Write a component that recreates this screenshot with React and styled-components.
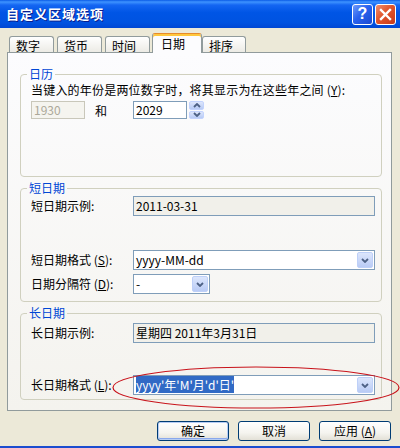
import styled, { createGlobalStyle, css } from 'styled-components'

// Styles
const GlobalStyle = createGlobalStyle`
  html, body {
    margin: 0;
    padding: 0;
    background: #ECE9D8;
  }
  body {
    font-family: "Noto Sans CJK SC", "Noto Sans", sans-serif;
    font-size: 12px;
    color: #000;
  }
`
const Window = styled('div')`
  position: relative;
  display: flex;
  flex-flow: column nowrap;
  width: 400px;
  height: 448px;
  box-sizing: border-box;
  background: #ECE9D8;
  border-bottom: 2px solid #1C4DCF;
  overflow: hidden;
`
const TitleBar = styled('div')`
  display: flex;
  flex-flow: row nowrap;
  align-items: center;
  height: 28px;
  padding: 0 4px 0 6px;
  background: linear-gradient(
    to bottom,
    #0A5BE6 0%,
    #3E93FF 7%,
    #1466F2 18%,
    #0055E5 45%,
    #0053E1 80%,
    #0047D4 100%
  );
`
const Title = styled('span')`
  font-size: 13px;
  font-weight: 700;
  letter-spacing: 1px;
  color: #FFFFFF;
  text-shadow: 1px 1px 0 #0A1E8C;
  line-height: 16px;
`
const Caption = styled('div')`
  display: flex;
  gap: 2px;
  margin-left: auto;
`
const CaptionButton = styled('span')`
  box-sizing: border-box;
  display: flex;
  align-items: center;
  justify-content: center;
  width: 21px;
  height: 21px;
  border: 1px solid #FFFFFF;
  border-radius: 3px;
  color: #FFFFFF;
  font-family: "Liberation Sans", sans-serif;
  font-weight: 700;
  font-size: 16px;
  ${({ $close }) =>
    $close
      ? css`
          background: linear-gradient(135deg, #F08E6E 0%, #E0552C 45%, #C5391A 100%);
        `
      : css`
          background: linear-gradient(135deg, #6F9BFA 0%, #2962EE 45%, #1A48D0 100%);
        `}
`
const Body = styled('div')`
  display: flex;
  flex-flow: column nowrap;
  flex-grow: 1;
  padding: 5px 8px 0 7px;
`
const TabStrip = styled('div')`
  display: flex;
  flex-flow: row nowrap;
  align-items: flex-end;
  gap: 3px;
  height: 19px;
  padding-left: 2px;
`
const Tab = styled('div')`
  box-sizing: border-box;
  flex-shrink: 0;
  width: ${({ $w }) => $w}px;
  height: 16px;
  padding: 3px 0 0 6px;
  border: 1px solid #919B9C;
  border-bottom: none;
  border-radius: 3px 3px 0 0;
  background: linear-gradient(#FFFFFF, #ECEBE5);
  line-height: 12px;
  ${({ $active }) =>
    $active &&
    css`
      position: relative;
      z-index: 1;
      height: 20px;
      margin: 0 -3px -1px -1px;
      padding: 4px 0 0 8px;
      border-top-color: #E68B2C;
      box-shadow: inset 0 2px 0 #FFC73C;
      background: #FCFCFE;
    `}
`
const Panel = styled('div')`
  box-sizing: border-box;
  display: flex;
  flex-flow: column nowrap;
  gap: 3px;
  height: 359px;
  padding: 13px 9px 0 12px;
  border: 1px solid #919B9C;
  background: linear-gradient(#FCFCFE, #F4F3EE);
`
const Group = styled('fieldset')`
  box-sizing: border-box;
  min-width: 0;
  height: ${({ $h }) => $h}px;
  margin: 0;
  padding: ${({ $pt }) => $pt || 0}px 6px 0 10px;
  border: 1px solid #D0D0BF;
  border-radius: 4px;
`
const Legend = styled('legend')`
  margin-left: -4px;
  padding: 0 2px;
  color: #0046D5;
  line-height: 16px;
`
const Prompt = styled('div')`
  margin-top: 1px;
  line-height: 13px;
  letter-spacing: 0.2px;
  white-space: nowrap;
`
const YearRow = styled('div')`
  display: grid;
  grid-template-columns: 102px auto;
  align-items: center;
  margin-top: 5px;
`
const Inline = styled('div')`
  display: flex;
  flex-flow: row nowrap;
  align-items: center;
  gap: ${({ $gap }) => $gap}px;
`
const Row = styled('div')`
  display: grid;
  grid-template-columns: 102px 1fr;
  align-items: center;
  margin-top: ${({ $mt }) => $mt || 0}px;
`
const Label = styled('span')`
  line-height: 14px;
  white-space: nowrap;
`
const Field = styled('div')`
  box-sizing: border-box;
  display: flex;
  flex-flow: row nowrap;
  align-items: center;
  width: ${({ $w }) => ($w ? `${$w}px` : '100%')};
  height: ${({ $h }) => $h || 20}px;
  padding: 0 1px 0 2px;
  border: 1px solid #7F9DB9;
  background: #FFFFFF;
  line-height: 14px;
  white-space: nowrap;
  ${({ $readOnly }) =>
    $readOnly &&
    css`
      background: #F1F0EA;
    `}
  ${({ $disabled }) =>
    $disabled &&
    css`
      border-color: #C9C7BA;
      background: #F5F4EF;
      color: #ACA899;
    `}
`
const Selected = styled('span')`
  background: #316AC5;
  color: #FFFFFF;
`
const DropButton = styled('span')`
  box-sizing: border-box;
  display: flex;
  align-items: center;
  justify-content: center;
  width: 16px;
  height: 16px;
  margin-left: auto;
  border: 1px solid #BED0F8;
  border-radius: 2px;
  background: linear-gradient(#DCE6FC, #B9CBF5);
`
const Spinner = styled('div')`
  display: flex;
  flex-flow: column nowrap;
  gap: 1px;
  width: 15px;
  height: 18px;
`
const SpinHalf = styled('span')`
  box-sizing: border-box;
  display: flex;
  align-items: center;
  justify-content: center;
  flex-grow: 1;
  border: 1px solid #C3D3FD;
  border-radius: 2px;
  background: linear-gradient(#DDE6FB, #B7CAF5);
`
const Footer = styled('div')`
  display: flex;
  flex-flow: row nowrap;
  justify-content: flex-end;
  gap: 9px;
  margin-top: 10px;
  padding-right: 1px;
`
const Button = styled('span')`
  box-sizing: border-box;
  display: flex;
  align-items: center;
  justify-content: center;
  width: 72px;
  height: 20px;
  border: 1px solid #003C74;
  border-radius: 3px;
  background: linear-gradient(#FFFFFF 0%, #F5F4EF 60%, #E3E0D6 100%);
  line-height: 14px;
  ${({ $default }) =>
    $default &&
    css`
      box-shadow: inset 0 0 0 1px #B7CDF4, inset 0 -1px 0 1px #8AA8EC;
    `}
`
const Annotation = styled('svg')`
  position: absolute;
  left: 0;
  top: 0;
  pointer-events: none;
`

// Icons
const Chevron = ({ up }) => (
  <svg width="8" height="5" viewBox="0 0 8 5">
    <path
      d={up ? 'M1 4 L4 1 L7 4' : 'M1 1 L4 4 L7 1'}
      fill="none"
      stroke="#4D6185"
      strokeWidth="1.8"
    />
  </svg>
)
const CloseGlyph = () => (
  <svg width="13" height="13" viewBox="0 0 13 13">
    <path d="M2 2 L11 11 M11 2 L2 11" stroke="#FFFFFF" strokeWidth="2.4" strokeLinecap="square" />
  </svg>
)

const tabs = [
  { label: '数字', w: 45 },
  { label: '货币', w: 45 },
  { label: '时间', w: 45 },
  { label: '日期', w: 50, active: true },
  { label: '排序', w: 44 }
]

const Combo = ({ children, w }) => (
  <Field $w={w}>
    <span>{children}</span>
    <DropButton>
      <Chevron />
    </DropButton>
  </Field>
)

// Component
const App = () => (
  <>
    <GlobalStyle />
    <Window>
      <TitleBar>
        <Title>自定义区域选项</Title>
        <Caption>
          <CaptionButton>?</CaptionButton>
          <CaptionButton $close>
            <CloseGlyph />
          </CaptionButton>
        </Caption>
      </TitleBar>
      <Body>
        <TabStrip>
          {tabs.map(({ label, w, active }) => (
            <Tab key={label} $w={w} $active={active}>
              {label}
            </Tab>
          ))}
        </TabStrip>
        <Panel>
          <Group $h={111}>
            <Legend>日历</Legend>
            <Prompt>
              当键入的年份是两位数字时，将其显示为在这些年之间 (<u>Y</u>):
            </Prompt>
            <YearRow>
              <Inline $gap={10}>
                <Field $w={54} $h={18} $disabled>
                  1930
                </Field>
                <span>和</span>
              </Inline>
              <Inline $gap={2}>
                <Field $w={54} $h={18}>
                  2029
                </Field>
                <Spinner>
                  <SpinHalf>
                    <Chevron up />
                  </SpinHalf>
                  <SpinHalf>
                    <Chevron />
                  </SpinHalf>
                </Spinner>
              </Inline>
            </YearRow>
          </Group>
          <Group $h={122}>
            <Legend>短日期</Legend>
            <Row>
              <Label>短日期示例:</Label>
              <Field $readOnly>2011-03-31</Field>
            </Row>
            <Row $mt={34}>
              <Label>
                短日期格式 (<u>S</u>):
              </Label>
              <Combo>yyyy-MM-dd</Combo>
            </Row>
            <Row $mt={4}>
              <Label>
                日期分隔符 (<u>D</u>):
              </Label>
              <Combo w={77}>-</Combo>
            </Row>
          </Group>
          <Group $h={95} $pt={2}>
            <Legend>长日期</Legend>
            <Row>
              <Label>长日期示例:</Label>
              <Field $readOnly>星期四 2011年3月31日</Field>
            </Row>
            <Row $mt={32}>
              <Label>
                长日期格式 (<u>L</u>):
              </Label>
              <Combo>
                <Selected>yyyy'年'M'月'd'日'</Selected>
              </Combo>
            </Row>
          </Group>
        </Panel>
        <Footer>
          <Button $default>确定</Button>
          <Button>取消</Button>
          <Button>
            应用 (<u>A</u>)
          </Button>
        </Footer>
      </Body>
      <Annotation width="400" height="448" viewBox="0 0 400 448">
        <ellipse cx="256" cy="387.5" rx="143" ry="20.5" fill="none" stroke="#C8131B" strokeWidth="1.2" />
      </Annotation>
    </Window>
  </>
)

export default App
